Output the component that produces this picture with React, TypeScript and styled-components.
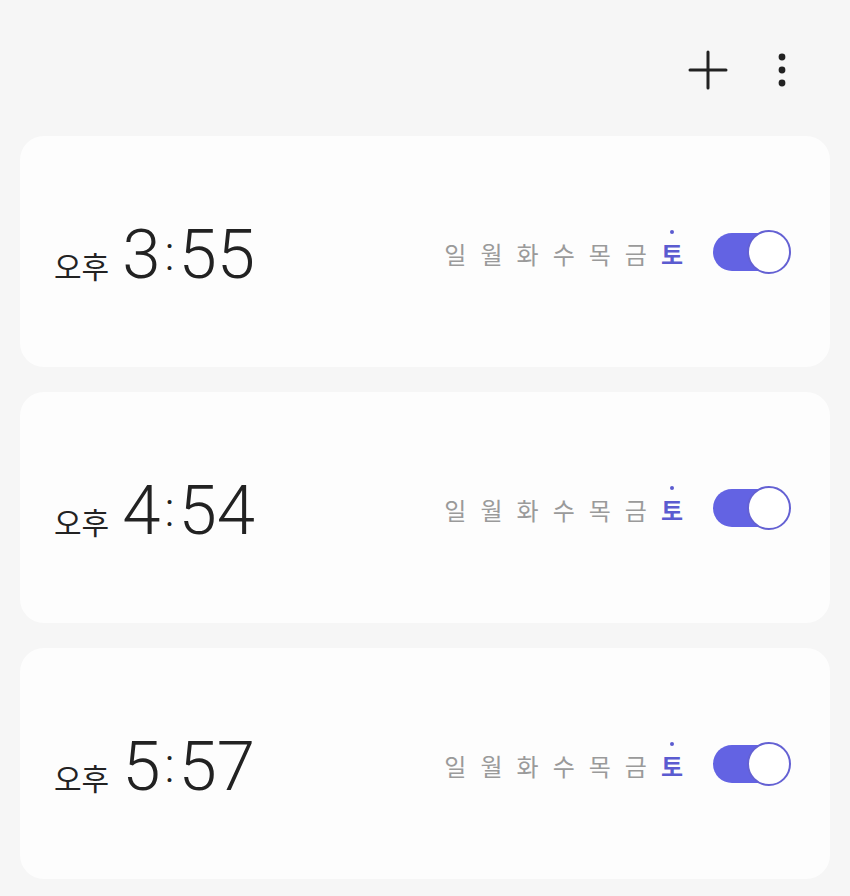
import styled, { createGlobalStyle } from 'styled-components';

const GlobalStyle = createGlobalStyle`
  html, body {
    margin: 0;
    padding: 0;
    background: #f6f6f6;
    font-family: Roboto, "Noto Sans CJK KR", sans-serif;
  }
`;

const alarms = [
  { period: '오후', time: '3:55' },
  { period: '오후', time: '4:54' },
  { period: '오후', time: '5:57' },
];

const days = ['일', '월', '화', '수', '목', '금', '토'];

function App() {
  return (
    <>
      <GlobalStyle />
      <Page>
        <TopBar>
          <IconButton aria-label="add">
            <svg width="40" height="40" viewBox="0 0 40 40">
              <path d="M20 2V38M2 20H38" stroke="#222" strokeWidth="3" strokeLinecap="round" />
            </svg>
          </IconButton>
          <IconButton aria-label="more">
            <svg width="12" height="40" viewBox="0 0 12 40">
              <circle cx="6" cy="7" r="3.4" fill="#222" />
              <circle cx="6" cy="20" r="3.4" fill="#222" />
              <circle cx="6" cy="33" r="3.4" fill="#222" />
            </svg>
          </IconButton>
        </TopBar>
        <List>
          {alarms.map((a) => {
            const [h, m] = a.time.split(':');
            return (
              <Card key={a.time}>
                <TimeBlock>
                  <Period>{a.period}</Period>
                  <Clock>
                    {h}
                    <Colon>:</Colon>
                    {m}
                  </Clock>
                </TimeBlock>
                <Right>
                  <Days>
                    {days.map((d, i) => (
                      <Day key={d} $active={i === 6}>
                        {d}
                      </Day>
                    ))}
                  </Days>
                  <Toggle>
                    <Thumb />
                  </Toggle>
                </Right>
              </Card>
            );
          })}
        </List>
      </Page>
    </>
  );
}

const Page = styled.div`
  width: 850px;
  min-height: 896px;
  box-sizing: border-box;
  padding: 50px 20px 0;
`;

const TopBar = styled.div`
  display: flex;
  justify-content: flex-end;
  align-items: center;
  gap: 48px;
  height: 40px;
  padding-right: 42px;
  margin-bottom: 46px;
`;

const IconButton = styled.div`
  display: flex;
  align-items: center;
  justify-content: center;
`;

const List = styled.div`
  display: flex;
  flex-direction: column;
  gap: 25px;
`;

const Card = styled.div`
  height: 231px;
  background: #fdfdfd;
  border-radius: 24px;
  display: flex;
  align-items: center;
  justify-content: space-between;
  padding: 0 41px 0 34px;
`;

const TimeBlock = styled.div`
  display: flex;
  align-items: baseline;
  gap: 13px;
  margin-top: 6px;
`;

const Period = styled.span`
  font-family: "Noto Sans CJK KR", sans-serif;
  font-size: 30px;
  font-weight: 400;
  color: #222;
`;

const Clock = styled.span`
  font-family: Roboto, sans-serif;
  font-size: 69px;
  font-weight: 300;
  color: #222;
  line-height: 1;
`;

const Colon = styled.span`
  display: inline-block;
  font-size: 48px;
  vertical-align: 8px;
  margin: 0 4px;
`;

const Right = styled.div`
  display: flex;
  align-items: center;
  gap: 30px;
`;

const Days = styled.div`
  display: flex;
  gap: 14px;
  margin-top: 4px;
`;

const Day = styled.span<{ $active?: boolean }>`
  position: relative;
  font-family: "Noto Sans CJK KR", sans-serif;
  font-size: 24px;
  font-weight: ${(p) => (p.$active ? 700 : 400)};
  color: ${(p) => (p.$active ? '#5b5bd0' : '#9a9a9a')};

  &::before {
    content: '';
    display: ${(p) => (p.$active ? 'block' : 'none')};
    position: absolute;
    left: 50%;
    top: -6px;
    width: 4px;
    height: 4px;
    margin-left: -2px;
    border-radius: 50%;
    background: #5b5bd0;
  }
`;

const Toggle = styled.div`
  position: relative;
  width: 76px;
  height: 38px;
  border-radius: 19px;
  background: #6363e3;
`;

const Thumb = styled.div`
  position: absolute;
  right: -2px;
  top: -3px;
  width: 40px;
  height: 40px;
  border-radius: 50%;
  background: #fff;
  border: 2px solid #6461d3;
`;

export default App;
